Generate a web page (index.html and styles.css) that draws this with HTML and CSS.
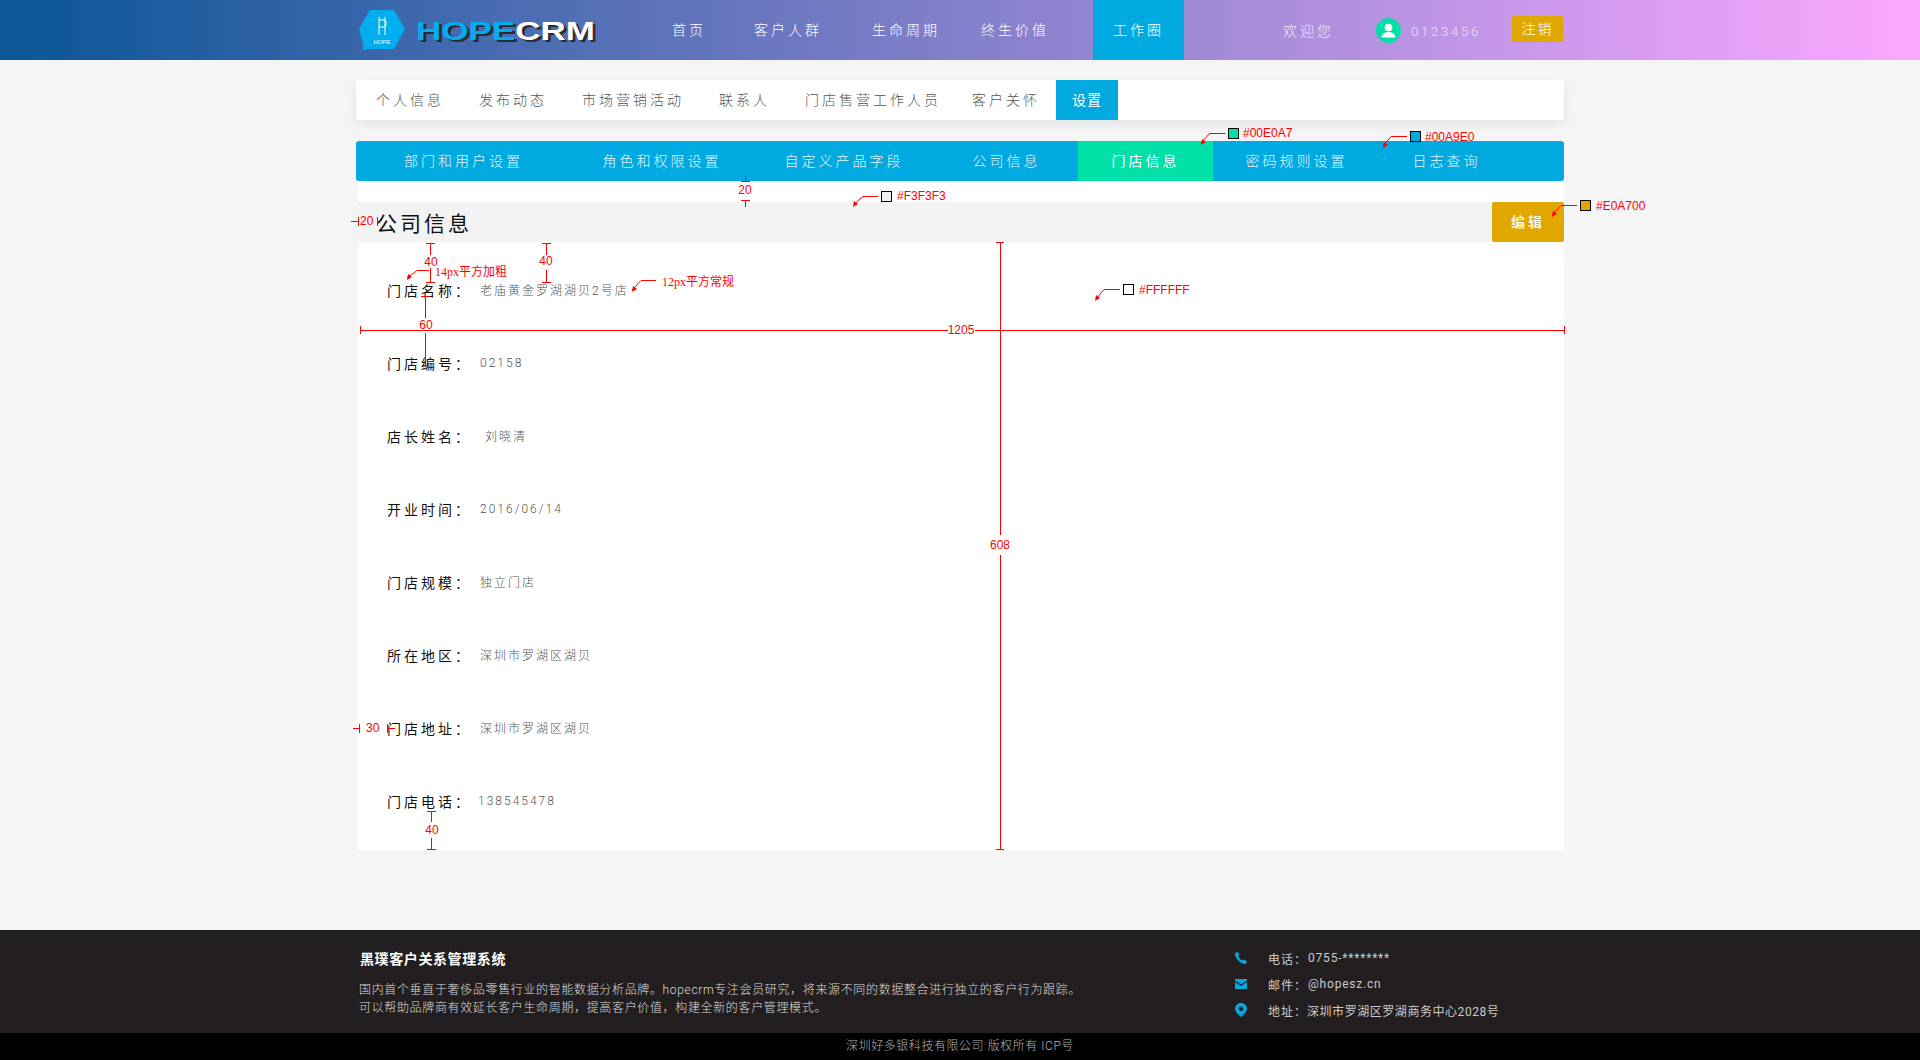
FILE: index.html
```html
<!DOCTYPE html>
<html lang="zh-CN">
<head>
<meta charset="utf-8">
<title>门店信息</title>
<link rel="stylesheet" href="styles.css">
</head>
<body>
<header class="topbar">
  <div class="wrap topbar-inner">
    <a class="logo">
      <svg class="logo-badge" width="46" height="41" viewBox="0 0 46 41"><path d="M11 0H35L46 19 35 39H8L4 41 4.500 35 0 19Z" fill="#00aeef"/><path d="M20 7V25M26 7V25M20 10H25Q27 10 27 13V14Q27 17 25 17H20" stroke="#fff" stroke-width="1" fill="none"/><text x="23" y="34" class="logo-hope" text-anchor="middle">HOPE</text></svg>
      <span class="logo-text"><span class="logo-blue">HOPE</span>CRM</span>
    </a>
    <nav class="nav">
      <a class="nav-item">首页</a>
      <a class="nav-item n2">客户人群</a>
      <a class="nav-item n3">生命周期</a>
      <a class="nav-item n4">终生价值</a>
      <a class="nav-item active">工作圈</a>
    </nav>
    <div class="user">
      <span class="welcome">欢迎您</span>
      <svg class="avatar" width="25" height="25" viewBox="0 0 25 25"><circle cx="12.500" cy="12.500" r="12.500" fill="#00e0a7"/><circle cx="12.500" cy="9.500" r="3.800" fill="#fff"/><path d="M5.500 19.500C6 15.500 9 14 12.500 14S19 15.500 19.500 19.500Z" fill="#fff"/></svg>
      <span class="uid">0123456</span>
      <a class="logout">注销</a>
    </div>
  </div>
</header>

<main class="wrap main">
  <div class="tabs">
    <a class="tab">个人信息</a>
    <a class="tab">发布动态</a>
    <a class="tab">市场营销活动</a>
    <a class="tab">联系人</a>
    <a class="tab">门店售营工作人员</a>
    <a class="tab t6">客户关怀</a>
    <a class="tab tab-active">设置</a>
  </div>
  <div class="subnav">
    <a class="sub">部门和用户设置</a>
    <a class="sub">角色和权限设置</a>
    <a class="sub">自定义产品字段</a>
    <a class="sub">公司信息</a>
    <a class="sub sub-active">门店信息</a>
    <a class="sub">密码规则设置</a>
    <a class="sub">日志查询</a>
  </div>
  <section class="panel">
    <div class="panel-head">
      <h2 class="panel-title">公司信息</h2>
      <a class="edit">编辑</a>
    </div>
    <div class="rows">
      <div class="row"><span class="label">门店名称：</span><span class="value">老庙黄金罗湖湖贝2号店</span></div>
      <div class="row"><span class="label">门店编号：</span><span class="value">02158</span></div>
      <div class="row"><span class="label">店长姓名：</span><span class="value v-right">刘晓清</span></div>
      <div class="row"><span class="label">开业时间：</span><span class="value">2016/06/14</span></div>
      <div class="row"><span class="label">门店规模：</span><span class="value">独立门店</span></div>
      <div class="row"><span class="label">所在地区：</span><span class="value">深圳市罗湖区湖贝</span></div>
      <div class="row"><span class="label">门店地址：</span><span class="value">深圳市罗湖区湖贝</span></div>
      <div class="row"><span class="label">门店电话：</span><span class="value v-left">138545478</span></div>
    </div>
  </section>
</main>

<footer class="footer">
  <div class="wrap footer-inner">
    <div class="about">
      <h3 class="about-title">黑璞客户关系管理系统</h3>
      <p class="about-text">国内首个垂直于奢侈品零售行业的智能数据分析品牌。hopecrm专注会员研究，将来源不同的数据整合进行独立的客户行为跟踪。<br>可以帮助品牌商有效延长客户生命周期，提高客户价值，构建全新的客户管理模式。</p>
    </div>
    <ul class="contact">
      <li class="contact-row"><svg class="contact-icon" width="12" height="12" viewBox="0 0 12 12"><path d="M2.500 0 4.500 2.800 3.300 4.300C4 6.200 5.500 7.700 7.500 8.600L9 7.400 12 9.300 11 11.500C10.500 12 9.500 12 8.500 11.700 4.500 10.500 1.300 7.200.2 3.300 0 2.300 0 1.500.5.800Z" fill="#00a9e0"/></svg><span class="c-key">电话：</span><span class="c-val">0755-********</span></li>
      <li class="contact-row"><svg class="contact-icon" width="12" height="10" viewBox="0 0 12 10"><path d="M0 0H12V1.500L6 5.500 0 1.500ZM0 3 6 7 12 3V10H0Z" fill="#00a9e0"/></svg><span class="c-key">邮件：</span><span class="c-val">@hopesz.cn</span></li>
      <li class="contact-row"><svg class="contact-icon" width="12" height="14" viewBox="0 0 12 14"><path fill-rule="evenodd" d="M6 0C9.300 0 12 2.500 12 5.800 12 8.500 9 11.500 6 14 3 11.500 0 8.500 0 5.800 0 2.500 2.700 0 6 0ZM6 3.500A2.300 2.300 0 1 0 6 8.100 2.300 2.300 0 1 0 6 3.500Z" fill="#00a9e0"/></svg><span class="c-key">地址：</span><span class="c-val v-addr">深圳市罗湖区罗湖商务中心2028号</span></li>
    </ul>
  </div>
  <div class="copyright">深圳好多银科技有限公司 版权所有 ICP号</div>
</footer>

<svg class="marks" width="1920" height="1060" viewBox="0 0 1920 1060">
  <g class="mk-line">
    <path d="M1225.500 133.500H1209.500L1201 143"/><path d="M1407 136.500H1391L1383 146"/><path d="M1577 205.500H1561L1552 215"/><path d="M1120 289.500H1104L1096 299"/><path d="M878 196.500H863L854 204"/><path d="M429 270.500H417L407 278"/><path d="M656 280.500H641L632 290"/>
    <path d="M745.500 176V181.500M741 181.500H750M741 200.500H750M745.500 200V207"/>
    <path d="M351 221.500H358.500M358.500 217V226M377.500 217V226"/>
    <path d="M426 243.500H435M430.500 243V255M430.500 268V282M426 282.500H435"/>
    <path d="M542 243.500H551M546.500 243V255M546.500 270V282M542 282.500H551"/>
    <path d="M421 296.500H430M425.500 296V318M425.500 333V367"/>
    <path d="M360.500 326V334M360 330.500H948M975 330.500H1564M1564.500 326V334"/>
    <path d="M996 242.500H1004M1000.500 242V535M1000.500 555V850M996 849.500H1004"/>
    <path d="M353 728.500H359.500M359.500 724V733M387.500 724V733M388 728.500H395"/>
    <path d="M427 811.500H436M431.500 811V822M431.500 838V849M427 849.500H436"/>
  </g>
  <g class="mk-dots">
    <path d="M1201 145 1206 142 1202 139Z"/><path d="M1383 148 1388 145 1384 142Z"/><path d="M1552 217 1557 214 1553 211Z"/><path d="M1095 301 1100 298 1096 295Z"/><path d="M853 207 858 204 854 201Z"/><path d="M407 280 412 277 408 274Z"/><path d="M632 292 637 289 633 286Z"/>
  </g>
  <g class="mk-swatch">
    <rect x="1228.500" y="128.500" width="10" height="10" fill="#00e0a7"/>
    <rect x="1410.500" y="131.500" width="10" height="10" fill="#00a9e0"/>
    <rect x="1580.500" y="200.500" width="10" height="10" fill="#e0a700"/>
    <rect x="1123.500" y="284.500" width="10" height="10" fill="#fff"/>
    <rect x="881.500" y="191.500" width="10" height="10" fill="#f3f3f3"/>
  </g>
  <g class="mk-text">
    <text x="1243" y="137">#00E0A7</text>
    <text x="1425" y="141">#00A9E0</text>
    <text x="1596" y="210">#E0A700</text>
    <text x="1139" y="294">#FFFFFF</text>
    <text x="897" y="200">#F3F3F3</text>
    <text x="745" y="194" text-anchor="middle">20</text>
    <text x="360" y="225">20</text>
    <text x="431" y="266" text-anchor="middle">40</text>
    <text x="546" y="265" text-anchor="middle">40</text>
    <text x="426" y="329" text-anchor="middle">60</text>
    <text x="961" y="334" text-anchor="middle">1205</text>
    <text x="1000" y="549" text-anchor="middle">608</text>
    <text x="366" y="732">30</text>
    <text x="432" y="834" text-anchor="middle">40</text>
    <text x="435" y="276" class="mk-cn">14px平方加粗</text>
    <text x="662" y="286" class="mk-cn">12px平方常规</text>
  </g>
</svg>
</body>
</html>
```
FILE: styles.css
```css
* { box-sizing: border-box; }
html, body { margin: 0; padding: 0; }
body {
  position: relative;
  width: 1920px;
  height: 1060px;
  overflow: hidden;
  background: #f5f5f5;
  font-family: Roboto, "Noto Sans CJK SC", sans-serif;
  font-size: 14px;
  color: #333;
}
a { display: block; text-decoration: none; }
h2, h3, p, ul { margin: 0; padding: 0; list-style: none; font-weight: inherit; }
.wrap { width: 1208px; margin: 0 auto; }

.topbar {
  height: 60px;
  background: linear-gradient(90deg, #0a5696 0%, #fba9ff 100%);
  color: #fff;
}
.topbar-inner { display: flex; align-items: center; height: 60px; }
.logo { display: flex; align-items: center; width: 316px; padding-left: 3px; }
.logo-badge { flex: none; }
.logo-hope { font: 6px "Liberation Sans", sans-serif; fill: #fff; }
.logo-text {
  display: inline-block;
  margin: 3px 0 0 11px;
  font: bold 25px/25px "Liberation Sans", sans-serif;
  color: #fff;
  text-shadow: 2px 2px 0 #2b2b33;
  transform: scaleX(1.4);
  transform-origin: left center;
}
.logo-blue { color: #00aeef; }

.nav { display: flex; align-items: center; height: 60px; }
.nav-item { letter-spacing: 3px; font-weight: 300; line-height: 60px; }
.n2 { margin-left: 48px; }
.n3 { margin-left: 50px; }
.n4 { margin-left: 41px; }
.nav-item.active { width: 91px; margin-left: 44px; text-align: center; background: #00a9e0; }

.user { display: flex; align-items: center; margin-left: 99px; }
.welcome { width: 93px; letter-spacing: 3px; font-weight: 300; color: #f3edf9; }
.avatar { flex: none; }
.uid { width: 101px; margin-left: 10px; padding-top: 2px; font-size: 13px; letter-spacing: 2.800px; font-weight: 300; color: #eee2f6; }
.logout {
  width: 51px;
  height: 26px;
  line-height: 26px;
  margin-top: -3px;
  text-align: center;
  letter-spacing: 2px;
  border-radius: 2px;
  background: #e0a700;
  color: #fff;
  font-weight: 300;
}

.main { height: 870px; padding-top: 20px; }
.tabs {
  display: flex;
  height: 40px;
  padding-left: 20px;
  gap: 35px;
  border-radius: 3px;
  background: #fff;
  box-shadow: 0 4px 12px rgba(0, 0, 0, .08);
}
.tab { line-height: 40px; letter-spacing: 3px; font-weight: 300; color: #555; }
.t6 { margin-left: -4px; }
.tab-active {
  width: 62px;
  margin-left: -19px;
  text-align: center;
  letter-spacing: 1px;
  font-weight: 400;
  background: #00a9e0;
  color: #fff;
}

.subnav {
  display: grid;
  grid-template-columns: 215px 182px 182px 143px 135px 167px 133px 51px;
  height: 40px;
  margin-top: 21px;
  border-radius: 3px;
  background: #00a9e0;
}
.sub { line-height: 40px; text-align: center; letter-spacing: 3px; font-weight: 300; color: #e4f6fc; }
.sub-active { background: #00e0a7; color: #fff; font-weight: 400; }

.panel { height: 669px; margin-left: 2px; padding-top: 21px; background: #fff; }
.panel-head { display: flex; justify-content: space-between; align-items: center; height: 40px; background: #f3f3f3; }
.panel-title { padding-left: 18px; letter-spacing: 3px; font-weight: 400; color: #111; }
.edit {
  width: 72px;
  height: 40px;
  line-height: 40px;
  text-align: center;
  letter-spacing: 3px;
  font-weight: 500;
  border-radius: 2px;
  background: #e0a700;
  color: #fff;
}
.rows { padding-top: 11px; }
.row { display: flex; align-items: center; height: 73px; padding-left: 29px; }
.label { width: 93px; letter-spacing: 3px; color: #111; }
.value { font-size: 12px; letter-spacing: 2px; font-weight: 300; color: #555; }
.v-right { margin-left: 5px; }
.v-left { margin-left: -2px; }

.footer { color: #ccc; }
.footer-inner { display: flex; height: 103px; }
.footer { background: linear-gradient(#231f20 103px, #000 103px); height: 130px; }
.about { width: 879px; padding: 20px 0 0 4px; }
.about-title { font-size: 14px; line-height: 18px; letter-spacing: .6px; font-weight: 700; color: #fff; }
.about-text { margin-top: 13px; font-size: 12px; line-height: 18px; letter-spacing: .65px; font-weight: 300; color: #ddd; margin-left: -1px; }
.contact { padding-top: 15px; }
.contact-row { display: flex; align-items: center; height: 26px; font-size: 12px; color: #ccc; }
.contact-icon { flex: none; }
.c-key { width: 61px; padding-left: 21px; letter-spacing: 1px; }
.c-val { letter-spacing: .8px; }
.v-addr { margin-left: -1px; letter-spacing: .55px; }
.copyright { height: 27px; line-height: 27px; text-align: center; font-size: 12px; letter-spacing: .55px; font-weight: 300; color: #b5b5b5; }

.marks { position: absolute; left: 0; top: 0; pointer-events: none; }
.mk-line path { fill: none; stroke: #f00; stroke-width: 1; }
.mk-dots path { fill: #f00; }
.mk-swatch rect { stroke: #000; stroke-width: 1; }
.mk-text text { font: 12px "Liberation Sans", "Noto Sans CJK SC", sans-serif; fill: #f00; }
.mk-text .mk-cn { font-family: "Liberation Serif", "Noto Sans CJK SC", serif; }
```
